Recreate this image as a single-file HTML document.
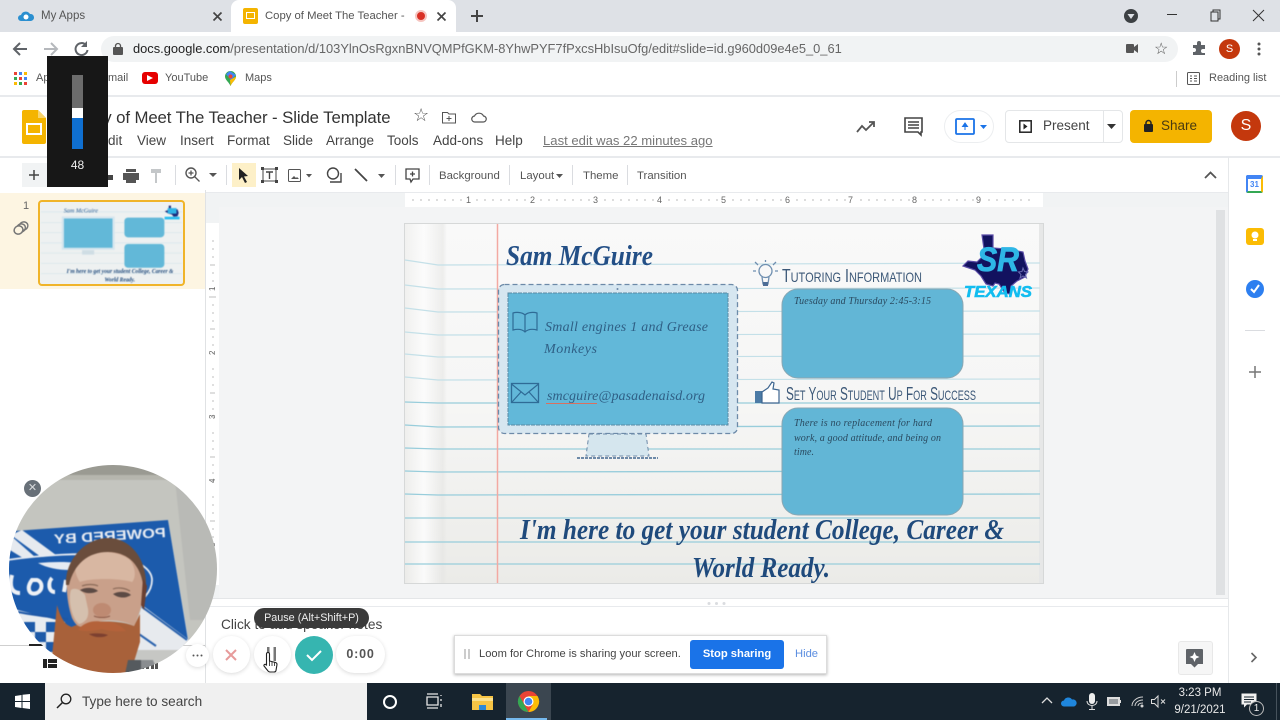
<!DOCTYPE html>
<html><head><meta charset="utf-8"><style>
*{box-sizing:border-box}
html,body{margin:0;padding:0;width:1280px;height:720px;overflow:hidden;background:#fff;font-family:"Liberation Sans",sans-serif;color:#444}
.a{position:absolute;white-space:nowrap}
svg{position:absolute;overflow:visible}
.m{font-size:13.500px;color:#444;top:133px}
.t{font-size:11.400px;color:#555;top:169.500px}
.sep{position:absolute;width:1px;background:#dadce0;top:165px;height:20px}
</style></head><body>
<!-- chrome tabs -->
<div class="a" style="left:0;top:0;width:1280px;height:32px;background:#dee1e6"></div>
<div class="a" style="left:231px;top:0;width:225px;height:32px;background:#fff;border-radius:8px 8px 0 0"></div>
<svg style="left:18px;top:9px" width="16" height="14"><path d="M3 12a3 3 0 0 1 0-6 5 5 0 0 1 9-1 3.500 3.500 0 0 1 1 7z" fill="#2a8fd0"/><circle cx="8" cy="8" r="2.500" fill="#fff"/></svg>
<div class="a" style="left:41px;top:10px;font-size:11.500px;color:#555">My Apps</div>
<svg style="left:213px;top:12px" width="9" height="9"><path d="M.5.500l8 8M8.500.500l-8 8" stroke="#444" stroke-width="1.700"/></svg>
<div class="a" style="left:243px;top:8px;width:15px;height:16px;background:#f4b400;border-radius:2px"></div>
<div class="a" style="left:246px;top:12px;width:9px;height:7px;background:#fff"></div>
<div class="a" style="left:247px;top:13px;width:7px;height:5px;background:#f4b400"></div>
<div class="a" style="left:265px;top:10px;font-size:11.300px;color:#555;width:140px;overflow:hidden">Copy of Meet The Teacher -</div>
<div class="a" style="left:415px;top:10px;width:12px;height:12px;border-radius:50%;background:#d93025;border:2px solid #f6c5c0"></div>
<svg style="left:437px;top:12px" width="9" height="9"><path d="M.5.500l8 8M8.500.500l-8 8" stroke="#444" stroke-width="1.700"/></svg>
<svg style="left:470px;top:9px" width="14" height="14"><path d="M7 1v12M1 7h12" stroke="#444" stroke-width="2"/></svg>
<svg style="left:1124px;top:9px" width="14" height="14"><circle cx="7" cy="7" r="7" fill="#3c4043"/><path d="M3.500 5h7L7 10z" fill="#dee1e6"/></svg>
<svg style="left:1160px;top:8px" width="110" height="16"><path d="M7 6.500h10" stroke="#333" stroke-width="1"/><path d="M51 4h7v9h-7zM53 4V2h7v9h-2" fill="none" stroke="#333"/><path d="M93 2l11 11M104 2L93 13" stroke="#333" stroke-width="1"/></svg>
<!-- address bar -->
<svg style="left:12px;top:40px" width="80" height="18"><path d="M15 9H3M8 3L2 9l6 6" fill="none" stroke="#5f6368" stroke-width="2"/><path d="M32 9h12M39 3l6 6-6 6" fill="none" stroke="#b5b8bc" stroke-width="2"/><path d="M74 5a6 6 0 1 0 1.500 5" fill="none" stroke="#5f6368" stroke-width="2"/><path d="M75 1v6h-6z" fill="#5f6368"/></svg>
<div class="a" style="left:101px;top:36px;width:1077px;height:26px;background:#f1f3f4;border-radius:13px"></div>
<svg style="left:113px;top:43px" width="10" height="12"><rect y="4" width="10" height="8" rx="1" fill="#555"/><path d="M2.500 5V3a2.500 2.500 0 0 1 5 0v2" fill="none" stroke="#555" stroke-width="1.300"/></svg>
<div class="a" style="left:133px;top:41px;font-size:12.870px;color:#666"><span style="color:#222">docs.google.com</span>/presentation/d/103YlnOsRgxnBNVQMPfGKM-8YhwPYF7fPxcsHbIsuOfg/edit#slide=id.g960d09e4e5_0_61</div>
<svg style="left:1126px;top:43px" width="12" height="11"><rect y="1" width="8" height="9" rx="1" fill="#555"/><path d="M8 4l4-3v9L8 7z" fill="#555"/></svg>
<div class="a" style="left:1154px;top:39px;font-size:16px;color:#555">☆</div>
<svg style="left:1192px;top:41px" width="15" height="15"><path d="M1 4h4V2a2 2 0 0 1 4 0v2h4v4h-2a2 2 0 0 0 0 4h2v2H1v-3h1a2 2 0 0 0 0-4H1z" fill="#5f6368"/></svg>
<div class="a" style="left:1219px;top:39px;width:21px;height:20px;border-radius:50%;background:#c4380d;color:#fff;font-size:11px;text-align:center;line-height:20px">S</div>
<svg style="left:1257px;top:42px" width="4" height="15"><circle cx="2" cy="2" r="1.500" fill="#555"/><circle cx="2" cy="7" r="1.500" fill="#555"/><circle cx="2" cy="12" r="1.500" fill="#555"/></svg>
<!-- bookmarks -->
<svg style="left:14px;top:72px" width="13" height="13"><g fill="#ea4335"><rect width="3" height="3"/><rect x="5" width="3" height="3" fill="#4285f4"/><rect x="10" width="3" height="3" fill="#fbbc05"/><rect y="5" width="3" height="3" fill="#34a853"/><rect x="5" y="5" width="3" height="3"/><rect x="10" y="5" width="3" height="3" fill="#4285f4"/><rect y="10" width="3" height="3" fill="#fbbc05"/><rect x="5" y="10" width="3" height="3" fill="#34a853"/><rect x="10" y="10" width="3" height="3"/></g></svg>
<div class="a" style="left:36px;top:72px;font-size:11px;color:#555">Apps</div>
<div class="a" style="left:108px;top:72px;font-size:11px;color:#555">mail</div>
<div class="a" style="left:142px;top:72px;width:16px;height:12px;background:#e60000;border-radius:3px"></div>
<svg style="left:147px;top:75px" width="7" height="7"><path d="M0 0l6 3-6 3z" fill="#fff"/></svg>
<div class="a" style="left:165px;top:72px;font-size:11px;color:#555">YouTube</div>
<svg style="left:225px;top:71px" width="11" height="15"><path d="M5.500 0a5.500 5.500 0 0 1 5.500 5.500C11 9 7 11 5.500 15 4 11 0 9 0 5.500A5.500 5.500 0 0 1 5.500 0z" fill="#34a853"/><path d="M1 3l4 -3 6 4-5 5z" fill="#4285f4"/><path d="M11 5.500C11 9 7 11 5.500 15L5 9z" fill="#fbbc05"/><circle cx="5.500" cy="5.500" r="2" fill="#ea4335"/></svg>
<div class="a" style="left:245px;top:72px;font-size:11px;color:#555">Maps</div>
<div class="a" style="left:1176px;top:71px;width:1px;height:16px;background:#ccc"></div>
<svg style="left:1187px;top:72px" width="13" height="13"><rect x=".5" y=".5" width="12" height="12" rx="1" fill="none" stroke="#555"/><path d="M3 4h2M3 6.500h2M3 9h2M7 4h3M7 6.500h3M7 9h3" stroke="#555"/></svg>
<div class="a" style="left:1209px;top:72px;font-size:11px;color:#555">Reading list</div>
<div class="a" style="left:0;top:95px;width:1280px;height:2px;background:#e8eaed"></div>
<!-- docs header -->
<svg style="left:22px;top:110px" width="24" height="34"><path d="M2 0h14l8 8v24a2 2 0 0 1-2 2H2a2 2 0 0 1-2-2V2a2 2 0 0 1 2-2z" fill="#f4b400"/><path d="M16 0l8 8h-8z" fill="#f8d36a"/><rect x="5" y="14" width="14" height="10" fill="none" stroke="#fff" stroke-width="2"/></svg>
<div class="a" style="left:94px;top:108px;font-size:16.800px;color:#333;letter-spacing:-.1px">py of Meet The Teacher - Slide Template</div>
<div class="a" style="left:413px;top:105px;font-size:18px;color:#555">☆</div>
<svg style="left:442px;top:110px" width="50" height="14"><path d="M.5 2.500h5l1.500 1.500h6.500v9H.5z" fill="none" stroke="#555"/><path d="M7 6v5M4.500 8.500H9.500" stroke="#555"/><path d="M33 12a3 3 0 0 1-.5-6 5 5 0 0 1 9 0 3 3 0 0 1-.5 6z" fill="none" stroke="#555" stroke-width="1.200"/></svg>
<div class="a m" style="left:108px">dit</div>
<div class="a m" style="left:137px">View</div>
<div class="a m" style="left:180px">Insert</div>
<div class="a m" style="left:227px">Format</div>
<div class="a m" style="left:283px">Slide</div>
<div class="a m" style="left:326px">Arrange</div>
<div class="a m" style="left:387px">Tools</div>
<div class="a m" style="left:433px">Add-ons</div>
<div class="a m" style="left:495px">Help</div>
<div class="a m" style="left:543px;font-size:13.100px;top:133px;color:#777;text-decoration:underline">Last edit was 22 minutes ago</div>
<svg style="left:856px;top:120px" width="20" height="14"><path d="M1 12l5-6 4 4 8-8M13 2h5v5" fill="none" stroke="#555" stroke-width="1.800"/></svg>
<svg style="left:904px;top:117px" width="19" height="19"><path d="M1 1h17v14h-1v3l-3-3H1z" fill="none" stroke="#444" stroke-width="1.600"/><path d="M4 5h11M4 8h11M4 11h11" stroke="#444" stroke-width="1.400"/></svg>
<div class="a" style="left:944px;top:110px;width:50px;height:33px;border:1px solid #eceef0;border-radius:17px"></div>
<svg style="left:955px;top:118px" width="32" height="17"><rect x="1" y="1" width="18" height="15" rx="1" fill="none" stroke="#1a73e8" stroke-width="1.800"/><path d="M10 12V7M7.500 8.500L10 5l2.500 3.500z" stroke="#1a73e8" fill="#1a73e8"/><path d="M25 7h7l-3.500 4z" fill="#1a73e8"/></svg>
<div class="a" style="left:1005px;top:110px;width:118px;height:33px;border:1px solid #e4e6e8;border-radius:4px"></div>
<div class="a" style="left:1103px;top:110px;width:1px;height:33px;background:#e4e6e8"></div>
<svg style="left:1019px;top:120px" width="13" height="13"><rect x=".8" y=".8" width="11.400" height="11.400" fill="none" stroke="#222" stroke-width="1.500"/><path d="M4.500 3.500l4 3-4 3z" fill="#222"/></svg>
<div class="a" style="left:1043px;top:118px;font-size:13.500px;color:#444">Present</div>
<svg style="left:1107px;top:124px" width="9" height="5"><path d="M0 0h9L4.500 5z" fill="#333"/></svg>
<div class="a" style="left:1130px;top:110px;width:82px;height:33px;background:#f4b400;border-radius:4px"></div>
<svg style="left:1144px;top:120px" width="9" height="12"><rect y="4" width="9" height="8" rx="1" fill="#222"/><path d="M2 5V3a2.500 2.500 0 0 1 5 0v2" fill="none" stroke="#222" stroke-width="1.500"/></svg>
<div class="a" style="left:1161px;top:118px;font-size:13.500px;color:#4a3b10">Share</div>
<div class="a" style="left:1231px;top:111px;width:30px;height:30px;border-radius:50%;background:#c4380d;color:#fff;font-size:16px;text-align:center;line-height:30px">S</div>
<div class="a" style="left:0;top:156px;width:1280px;height:2px;background:#e8eaed"></div>
<!-- toolbar -->
<div class="a" style="left:22px;top:163px;width:25px;height:24px;background:#f1f3f4"></div>
<svg style="left:29px;top:170px" width="10" height="10"><path d="M5 0v10M0 5h10" stroke="#444" stroke-width="1.500"/></svg>
<svg style="left:105px;top:169px" width="60" height="14"><path d="M0 6h8v5H0z" fill="#444"/><path d="M18 4h16v7h-3v3H21v-3h-3z" fill="#555"/><path d="M21 0h10v3H21z" fill="#555"/><path d="M46 0h10v4H46zM50 4h2v10h-2z" fill="#c4c7c9"/></svg>
<div class="sep" style="left:175px"></div>
<svg style="left:185px;top:167px" width="32" height="16"><circle cx="6" cy="6" r="5" fill="none" stroke="#555" stroke-width="1.400"/><path d="M9.500 9.500l5 5M3.500 6h5M6 3.500v5" stroke="#555" stroke-width="1.300"/><path d="M24 6h8l-4 4z" fill="#555"/></svg>
<div class="sep" style="left:226px"></div>
<div class="a" style="left:232px;top:163px;width:24px;height:24px;background:#fdf0c8"></div>
<svg style="left:238px;top:168px" width="12" height="15"><path d="M1 0l9 8-4 .5 3 5.500-2 1-3-6-3 3z" fill="#222"/></svg>
<svg style="left:261px;top:167px" width="17" height="16"><rect x="2" y="2" width="13" height="12" fill="none" stroke="#444"/><path d="M5 5h7M8.500 5v7" stroke="#444" stroke-width="1.400"/><g fill="#444"><rect width="3" height="3"/><rect x="14" width="3" height="3"/><rect y="13" width="3" height="3"/><rect x="14" y="13" width="3" height="3"/></g></svg>
<svg style="left:288px;top:169px" width="28" height="13"><rect x=".5" y=".5" width="12" height="12" rx="1" fill="none" stroke="#555"/><path d="M3 10l3-3 2 2 1-1 2 2z" fill="#555"/><path d="M18 5h6l-3 3.500z" fill="#555"/></svg>
<svg style="left:326px;top:167px" width="16" height="16"><circle cx="7" cy="6.500" r="5.500" fill="none" stroke="#444" stroke-width="1.400"/><path d="M4 15h11V6" fill="none" stroke="#444" stroke-width="1.400"/></svg>
<svg style="left:354px;top:168px" width="32" height="14"><path d="M1 1l12 12" stroke="#444" stroke-width="1.800"/><path d="M24 6h7l-3.500 4z" fill="#555"/></svg>
<div class="sep" style="left:395px"></div>
<svg style="left:405px;top:168px" width="15" height="15"><path d="M1 1h13v10H8l-2 3-1-3H1z" fill="none" stroke="#444" stroke-width="1.300"/><path d="M7.500 3.500v5M5 6h5" stroke="#444" stroke-width="1.300"/></svg>
<div class="sep" style="left:429px"></div>
<div class="a t" style="left:439px">Background</div>
<div class="sep" style="left:509px"></div>
<div class="a t" style="left:520px">Layout</div>
<svg style="left:556px;top:174px" width="7" height="4"><path d="M0 0h7L3.500 4z" fill="#555"/></svg>
<div class="sep" style="left:572px"></div>
<div class="a t" style="left:583px">Theme</div>
<div class="sep" style="left:627px"></div>
<div class="a t" style="left:637px">Transition</div>
<svg style="left:1204px;top:171px" width="13" height="8"><path d="M1 7l5.500-5.500L12 7" fill="none" stroke="#555" stroke-width="1.800"/></svg>
<!-- panels -->
<div class="a" style="left:219px;top:207px;width:1009px;height:391px;background:#f3f4f5"></div>
<div class="a" style="left:206px;top:193px;width:1022px;height:14px;background:#f1f3f4"></div>
<div class="a" style="left:405px;top:193px;width:638px;height:14px;background:#fff"></div>
<div class="a" style="left:206px;top:207px;width:13px;height:391px;background:#fff"></div>
<div class="a" style="left:206px;top:207px;width:13px;height:16px;background:#f1f3f4"></div>
<div class="a" style="left:206px;top:585px;width:13px;height:13px;background:#f1f3f4"></div>
<div class="a" style="left:205px;top:190px;width:1px;height:493px;background:#e0e2e4"></div>
<div class="a" style="left:1228px;top:157px;width:1px;height:526px;background:#e6e8ea"></div>
<div class="a" style="left:206px;top:192px;width:1022px;height:1px;background:#e8eaed"></div>
<svg style="left:405px;top:193px" width="640" height="14" font-size="9" fill="#666" font-family="Liberation Sans">
<text x="61" y="10">1</text><text x="125" y="10">2</text><text x="188" y="10">3</text><text x="252" y="10">4</text><text x="316" y="10">5</text><text x="380" y="10">6</text><text x="443" y="10">7</text><text x="507" y="10">8</text><text x="571" y="10">9</text>
<path d="M8 6v2M16 6v2M24 6v2M32 6v2M40 6v2M48 6v2M56 6v2M72 6v2M80 6v2M88 6v2M96 6v2M104 6v2M112 6v2M120 6v2M136 6v2M144 6v2M152 6v2M160 6v2M168 6v2M176 6v2M184 6v2M200 6v2M208 6v2M216 6v2M224 6v2M232 6v2M240 6v2M248 6v2M264 6v2M272 6v2M280 6v2M288 6v2M296 6v2M304 6v2M312 6v2M328 6v2M336 6v2M344 6v2M352 6v2M360 6v2M368 6v2M376 6v2M392 6v2M400 6v2M408 6v2M416 6v2M424 6v2M432 6v2M440 6v2M456 6v2M464 6v2M472 6v2M480 6v2M488 6v2M496 6v2M504 6v2M520 6v2M528 6v2M536 6v2M544 6v2M552 6v2M560 6v2M568 6v2M584 6v2M592 6v2M600 6v2M608 6v2M616 6v2M624 6v2" stroke="#aaa" stroke-width=".8"/></svg>
<svg style="left:206px;top:207px" width="13" height="390" font-size="8" fill="#666" font-family="Liberation Sans">
<path d="M6 34h2M6 42h2M6 50h2M4 58h5M6 66h2M6 74h2M6 82h2M3 90h7M6 98h2M6 106h2M6 114h2M4 122h5M6 130h2M6 138h2M6 146h2M6 162h2M6 170h2M6 178h2M4 186h5M6 194h2M6 202h2M6 210h2M6 226h2M6 234h2M6 242h2M4 250h5M6 258h2M6 266h2M6 274h2M6 290h2M6 298h2M6 306h2M4 314h5M6 322h2M6 330h2" stroke="#aaa" stroke-width=".8"/>
<text transform="translate(9 84) rotate(-90)">1</text><text transform="translate(9 148) rotate(-90)">2</text><text transform="translate(9 212) rotate(-90)">3</text><text transform="translate(9 276) rotate(-90)">4</text><text transform="translate(9 340) rotate(-90)">5</text></svg>
<div class="a" style="left:1216px;top:210px;width:9px;height:385px;background:#dfe1e3"></div>
<div class="a" style="left:0;top:193px;width:205px;height:96px;background:#fdf5e2"></div>
<div class="a" style="left:23px;top:200px;font-size:11px;color:#666">1</div>
<svg style="left:13px;top:221px" width="16" height="14"><g fill="none" stroke="#777" stroke-width="1.500"><ellipse cx="10.500" cy="5" rx="4.500" ry="4" transform="rotate(-30 10.500 5)"/><ellipse cx="8" cy="7" rx="4.500" ry="4" transform="rotate(-30 8 7)"/><ellipse cx="5.500" cy="9" rx="4.500" ry="4" transform="rotate(-30 5.500 9)" fill="#fdf5e2"/></g></svg>
<!-- thumbnail -->
<div class="a" style="left:38px;top:200px;width:147px;height:86px;border:2px solid #f0b429;border-radius:4px;background:#eef1f1;overflow:hidden"></div>
<svg style="left:41px;top:203px;filter:blur(.5px)" width="141" height="80" viewBox="404 223 639 361" preserveAspectRatio="none">
<path d="M404 263h639M404 312h639M404 357h639M404 403h639M404 449h639M404 495h639M404 542h639" stroke="#d5e6ec" stroke-width="3"/>
<rect x="498" y="284" width="240" height="150" fill="#d5e5ee"/><rect x="508" y="293" width="220" height="132" fill="#62b8d8"/>
<rect x="782" y="289" width="181" height="89" rx="16" fill="#62b8d8"/><rect x="782" y="408" width="181" height="107" rx="16" fill="#62b8d8"/>
<path d="M965 261l18-8v-18h10v13l30 4 5 16-5 15-18 2-8-10-15-4z" fill="#1c2a7a"/><path d="M978 246h40v25h-40z" fill="#2fb3e6"/><rect x="964" y="285" width="68" height="12" fill="#25bdf0"/>
<rect x="590" y="436" width="55" height="20" fill="#cfdde4"/>
<text x="507" y="265" font-family="Liberation Serif" font-style="italic" font-size="28" fill="#2a5d94">Sam McGuire</text>
<text x="520" y="540" font-family="Liberation Serif" font-style="italic" font-weight="bold" font-size="28" fill="#1f4a7c" textLength="484" lengthAdjust="spacingAndGlyphs">I'm here to get your student College, Career &amp;</text>
<text x="692" y="578" font-family="Liberation Serif" font-style="italic" font-weight="bold" font-size="28" fill="#1f4a7c" textLength="138" lengthAdjust="spacingAndGlyphs">World Ready.</text>
</svg>
<!-- slide -->
<div class="a" style="left:404px;top:223px;width:640px;height:361px;background:linear-gradient(180deg,#f9f9f9 0,#f6f6f5 50%,#ebebe8 100%);border:1px solid #d6d8d8;overflow:hidden"></div>
<div class="a" style="left:405px;top:224px;width:42px;height:359px;background:linear-gradient(90deg,rgba(235,235,233,.6),rgba(252,252,252,.9) 45%,rgba(228,228,226,.55) 90%,rgba(240,240,238,0))"></div>
<div class="a" style="left:1039px;top:224px;width:4px;height:359px;background:#e6e7e7"></div>
<svg style="left:404px;top:223px" width="640" height="361" viewBox="404 223 640 361">
<g stroke="#c4e0e8" stroke-width="1.200" fill="none">
<path d="M405 260l33 5 602-2M405 285l33 4 602-1M405 308l33 4 602-1M405 332l33 3 602-1M405 354l33 3 602-1M405 377l33 3 602-1"/>
</g>
<g stroke="#98cddb" stroke-width="1.300" fill="none">
<path d="M405 402l33 1 602 0M405 425l33 2 602-1M405 448l33 1 602 0M405 471l33 1 602-1M405 494l33 1 602-1M405 518h635M405 542h635M405 564h635"/>
</g>
<path d="M497.500 224v359" stroke="#f3a9a2" stroke-width="1.500"/>
<!-- monitor -->
<rect x="498.500" y="284.500" width="239" height="149" rx="6" fill="#d6e6f0" stroke="#6d8aa8" stroke-width="1.300" stroke-dasharray="5 3"/>
<rect x="508" y="293" width="220" height="132" fill="#62b8d9" stroke="#5a8aa4" stroke-width="1" stroke-dasharray="4 1"/>
<circle cx="617.500" cy="289" r="1" fill="#6d8aa8"/>
<path d="M589 434h57l3 22h-63z" fill="#d5e6ee" stroke="#6d8aa8" stroke-dasharray="4 3"/>
<path d="M577 458h81" stroke="#6d8aa8" stroke-width="2" stroke-dasharray="3 1"/>
<!-- book -->
<path d="M525 315c-3-3-9-3-12-2v17c4-1 9-1 12 2 3-3 8-3 12-2v-17c-3-1-9-1-12 2zM525 315v17" fill="none" stroke="#2f6b96" stroke-width="1.200"/>
<rect x="511.500" y="383.500" width="27" height="19" fill="none" stroke="#2f6b96" stroke-width="1.300"/><path d="M511.500 384l13.500 11 13.500-11M512 402l9-10M538 402l-9-10" fill="none" stroke="#2f6b96" stroke-width="1.200"/>
<path d="M546 403.500h51" stroke="#d9705f" stroke-width="1"/>
<!-- bulb -->
<g fill="none" stroke="#6f8fb0" stroke-width="1.300"><circle cx="765.500" cy="271" r="6.500"/><path d="M762 277l1 7h5l1-7"/><path d="M755 262l3 3M776 262l-3 3M753 271h3M778 271h-3M765.500 260v2"/></g><path d="M763 282h5v4h-5z" fill="#4c6d96"/>
<!-- thumb -->
<path d="M755 391h7v12h-7z" fill="#4c7ba6"/><path d="M762 392l6-4 4-6 2 1-1 6 6 1v13h-17z" fill="#fff" stroke="#3d6590" stroke-width="1.200"/>
<rect x="782" y="289" width="181" height="89" rx="16" fill="#62b6d6" stroke="#8aa7b3"/>
<rect x="782" y="408" width="181" height="107" rx="16" fill="#62b6d6" stroke="#8aa7b3"/>
<!-- logo -->
<path d="M982 235h11v13l13 1 17 3 2 9 3 8-3 8-8 4-6 5-1 8-5-1-6-9-4-1-2 3-7-2-5-8-6-6-9-3-3-1 5-5 9 1 6-6 1-7z" fill="#12125f" stroke="#5a4ca6" stroke-width="1.200"/>
<path d="M1023 268l1.500 3.500 3.500.5-2.500 2.500 1 3.500-3.500-2-3 2 1-3.500-2.500-2.500 3.500-.5z" fill="none" stroke="#6a6ab0"/>
<text x="977" y="271" font-family="Liberation Sans" font-weight="bold" font-style="italic" font-size="34" fill="#2eb6e6" stroke="#2eb6e6" stroke-width=".8" textLength="42" lengthAdjust="spacingAndGlyphs">SR</text>
<text x="964" y="297" font-family="Liberation Sans" font-weight="bold" font-style="italic" font-size="16" fill="#12bdf0" stroke="#12bdf0" stroke-width=".6" textLength="68" lengthAdjust="spacingAndGlyphs">TEXANS</text>
<!-- texts -->
<text x="506" y="265" font-family="Liberation Serif" font-style="italic" font-weight="bold" font-size="29" fill="#234f86" textLength="147" lengthAdjust="spacingAndGlyphs">Sam McGuire</text>
<g font-family="Liberation Serif" font-style="italic" fill="#2f5f85" font-size="14">
<text x="545" y="331" textLength="163">Small engines 1 and Grease</text>
<text x="544" y="353" textLength="53">Monkeys</text>
<text x="547" y="400" textLength="158">smcguire@pasadenaisd.org</text></g>
<g font-family="Liberation Sans" fill="#3c5878">
<text x="782" y="282" font-size="18" textLength="140" lengthAdjust="spacingAndGlyphs">T<tspan font-size="14">UTORING</tspan> I<tspan font-size="14">NFORMATION</tspan></text>
<text x="786" y="400" font-size="18" textLength="190" lengthAdjust="spacingAndGlyphs">S<tspan font-size="14">ET</tspan> Y<tspan font-size="14">OUR</tspan> S<tspan font-size="14">TUDENT</tspan> U<tspan font-size="14">P</tspan> F<tspan font-size="14">OR</tspan> S<tspan font-size="14">UCCESS</tspan></text></g>
<g font-family="Liberation Serif" font-style="italic" fill="#2a4a60" font-size="10">
<text x="794" y="304" textLength="137">Tuesday and Thursday 2:45-3:15</text>
<text x="794" y="426" textLength="138">There is no replacement for hard</text>
<text x="794" y="441" textLength="147">work, a good attitude, and being on</text>
<text x="794" y="455" textLength="20">time.</text></g>
<g font-family="Liberation Serif" font-style="italic" font-weight="bold" fill="#1f4a7c" font-size="28">
<text x="520" y="539" textLength="484" lengthAdjust="spacingAndGlyphs">I'm here to get your student College, Career &amp;</text>
<text x="692" y="577" textLength="138" lengthAdjust="spacingAndGlyphs">World Ready.</text></g>
</svg>
<!-- notes -->
<div class="a" style="left:206px;top:598px;width:1022px;height:1px;background:#e4e6e8"></div>
<div class="a" style="left:206px;top:599px;width:1022px;height:8px;background:#fff;border-bottom:1px solid #e8eaed"></div>
<svg style="left:706px;top:601px" width="22" height="5"><circle cx="3" cy="2.500" r="1.500" fill="#dadce0"/><circle cx="10.500" cy="2.500" r="1.500" fill="#dadce0"/><circle cx="18" cy="2.500" r="1.500" fill="#dadce0"/></svg>
<div class="a" style="left:221px;top:617px;font-size:13.700px;color:#444">Click to add speaker notes</div>
<div class="a" style="left:454px;top:635px;width:373px;height:39px;background:#fff;border:1px solid #dcdcdc;box-shadow:0 1px 3px rgba(0,0,0,.3)"></div>
<div class="a" style="left:464px;top:649px;width:2px;height:10px;background:#ccc"></div><div class="a" style="left:468px;top:649px;width:2px;height:10px;background:#ccc"></div>
<div class="a" style="left:479px;top:648px;font-size:11.150px;line-height:13px;color:#444">Loom for Chrome is sharing your screen.</div>
<div class="a" style="left:690px;top:640px;width:94px;height:29px;background:#1a73e8;border-radius:3px;color:#fff;font-size:11.200px;font-weight:bold;text-align:center;line-height:29px">Stop sharing</div>
<div class="a" style="left:795px;top:648px;font-size:11.200px;line-height:13px;color:#5a8de0">Hide</div>
<div class="a" style="left:1178px;top:641px;width:35px;height:34px;background:#f6f6f6;border:1px solid #e8e8e8;border-radius:3px"></div>
<svg style="left:1186px;top:649px" width="17" height="19"><path d="M1 0h15a1 1 0 0 1 1 1v14h-5l-3.500 3.500L5 15H0V1a1 1 0 0 1 1-1z" fill="#5f6368"/><path d="M8.500 3l1.500 3.500 3.500 1.500-3.500 1.500-1.500 3.500-1.500-3.500L3.500 8 7 6.500z" fill="#fff"/></svg>
<svg style="left:1250px;top:652px" width="8" height="11"><path d="M1.500 1l4.500 4.500L1.500 10" fill="none" stroke="#666" stroke-width="1.600"/></svg>
<!-- right sidebar -->
<div class="a" style="left:1246px;top:175px;width:17px;height:18px;background:#fff;border:2px solid #4285f4;border-top-width:4px;border-radius:2px;border-right-color:#fbbc05;border-bottom-color:#34a853;color:#4285f4;font-size:8px;text-align:center;line-height:11px;font-weight:bold">31</div>
<div class="a" style="left:1246px;top:228px;width:18px;height:17px;background:#fbbc04;border-radius:3px"></div>
<svg style="left:1251px;top:231px" width="8" height="11"><circle cx="4" cy="4" r="3.500" fill="#fff"/><rect x="2" y="8" width="4" height="2" fill="#fff"/></svg>
<div class="a" style="left:1246px;top:280px;width:18px;height:18px;background:#2d7ff0;border-radius:50%"></div>
<svg style="left:1250px;top:284px" width="10" height="10"><path d="M1 5l3 3 5-7" fill="none" stroke="#fff" stroke-width="2"/></svg>
<div class="a" style="left:1245px;top:330px;width:20px;height:1px;background:#dadce0"></div>
<svg style="left:1249px;top:366px" width="12" height="12"><path d="M6 0v12M0 6h12" stroke="#777" stroke-width="1.500"/></svg>
<!-- bottom left filmstrip footer -->
<div class="a" style="left:0;top:645px;width:205px;height:1px;background:#cfcfcf"></div>
<div class="a" style="left:29px;top:644px;width:18px;height:2px;background:#222"></div>
<svg style="left:43px;top:659px" width="14" height="9"><path d="M0 0h4v9H0zM5 0h9v4H5zM5 5h9v4H5z" fill="#222"/></svg>
<svg style="left:140px;top:663px" width="19" height="6"><path d="M0 0h4v6H0zM6 0h3v6H6zM11 0h3v6h-3zM15 0h3v6h-3z" fill="#555"/></svg>
<!-- webcam -->
<svg style="left:0;top:460px" width="230" height="220" viewBox="0 460 230 220">
<defs><clipPath id="c"><circle cx="113" cy="569" r="104"/></clipPath></defs>
<g clip-path="url(#c)">
<g style="filter:blur(.6px)">
<rect x="0" y="460" width="230" height="220" fill="#c4c5bf"/>
<rect x="0" y="460" width="230" height="15" fill="#9a9a92"/>
<rect x="0" y="475" width="230" height="5" fill="#b6b6ae"/>
<path d="M175 480h45v140h-30z" fill="#b9bab6"/>
<path d="M168 520l20 118-3 3-3 0-20-120z" fill="#e6e8ea"/>
<!-- blue flag -->
<path d="M0 532l168-12 20 120-48-34-130 40L0 620z" fill="#1c5bac"/>
<!-- white top-left corner stripes -->
<path d="M22 530l34 25-15 2-30-22zM0 536l10-1 25 22-12 1-23-14z" fill="#e6eaef"/>
<text transform="translate(166 537) scale(-1 1) rotate(3.500)" font-family="Liberation Sans" font-weight="bold" font-size="13.500" fill="#e8ecf2" textLength="112" lengthAdjust="spacingAndGlyphs">POWERED BY</text>
<!-- oval -->
<path d="M0 561c40-6 85-9 115-5 22 3 37 13 37 24 0 12-10 22-25 30" fill="none" stroke="#e6ebf2" stroke-width="1.800"/>
<path d="M38 563c20-2 40-1 58 2-12 6-40 8-58-2z" fill="#e6ebf2"/>
<g fill="none" stroke="#eef1f5" stroke-width="4">
<path d="M12 575c-3 12 0 18 8 18"/><path d="M32 580c-6 8-3 16 5 13 6-3 6-11 0-13z"/><path d="M52 578c-4 4-4 14 3 14"/><path d="M66 580l-2 12"/>
</g>
<!-- white band lower -->
<path d="M10 608l55 14 0 50H30L6 645z" fill="#e8ecf0"/>
<path d="M18 612c20 4 42 6 50 7" stroke="#1d57a6" stroke-width="2" fill="none"/>
<path d="M24 622h11v10H24zM46 622h11v10H46zM35 632h11v10H35zM57 632h8v10h-8zM46 642h11v10H46zM30 642h6v8h-6z" fill="#1d5aa8"/>
<!-- lower right white -->
<path d="M142 605l47 35-14 15-45-5z" fill="#e7eaee"/>
<path d="M142 607l45 33M136 632l20 14" stroke="#2a62ad" stroke-width="2" fill="none"/>
<path d="M130 650h55v25h-55z" fill="#c6c7c4"/>
<!-- beard -->
<path d="M57 605c4 14 8 20 15 22 10-6 46-8 62-1l6-12 0 28-10 33H58l-6-18z" fill="#a8613a"/>
<path d="M56 660l14 15H46z" fill="#3a3c3a"/>
<path d="M128 660l14 0 8 14h-25z" fill="#555a5e"/>
<path d="M141 660h12l4 10h-16z" fill="#8a8d90"/>
<!-- face -->
<path d="M67 578c1-20 17-32 38-32 23 0 37 14 40 34l-3 24c-3 10-6 18-8 22-10-6-30-8-42-2-12 6-16 2-20-6-4-12-6-26-5-40z" fill="#c9a08a"/>
<path d="M71 590c-3 8 0 28 8 34 8-2 10-8 9-15l-3-14c-4-5-10-8-14-5z" fill="#d5c0ae"/>
<path d="M78 556c12-7 40-6 52 4 6 8 6 18 2 22-12-4-42-4-52 0-6-8-6-20-2-26z" fill="#d8b7a2"/>
<!-- hair -->
<path d="M66 585c-1-26 20-47 42-47 22 0 38 20 38 46l-3 0c-3-18-14-32-35-32-20 0-34 12-39 33z" fill="#6a4d3c"/>
<path d="M143 578l4 8-3 24-3-5z" fill="#6a4032"/>
<!-- eyes -->
<path d="M80 590c5-3 14-3 18 1-5 3-13 3-18-1zM113 594c5-3 14-3 18 1-6 4-13 3-18-1z" fill="#5c4a44"/>
<path d="M82 586c5-2 12-2 16 0M113 589c5-2 12-1 17 2" stroke="#8a6a58" stroke-width="1.200" fill="none"/>
<!-- nose -->
<ellipse cx="102" cy="610" rx="9" ry="7" fill="#be8a72"/>
<path d="M94 616c4 2 12 2 16 0" stroke="#8c5a48" fill="none"/>
<!-- mustache + lip -->
<path d="M78 630c6-8 16-10 24-8 8-2 18 2 24 9-8 1-18 0-24-2-8 2-16 3-24 1z" fill="#b4623a"/>
<path d="M89 634c6-1 14-1 19 1-4 3-14 3-19-1z" fill="#7c4030"/>
</g></g>
</svg>
<div class="a" style="left:24px;top:480px;width:17px;height:17px;border-radius:50%;background:#687078;color:#d8dadc;font-size:11px;text-align:center;line-height:17px">✕</div>
<!-- loom controls -->
<div class="a" style="left:186px;top:644px;width:23px;height:23px;border-radius:50%;background:#fff;box-shadow:0 1px 4px rgba(0,0,0,.15)"></div>
<svg style="left:192px;top:654px" width="11" height="3"><circle cx="1.500" cy="1.500" r="1" fill="#555"/><circle cx="5.500" cy="1.500" r="1" fill="#555"/><circle cx="9.500" cy="1.500" r="1" fill="#555"/></svg>
<div class="a" style="left:213px;top:636px;width:37px;height:37px;border-radius:50%;background:#fff;box-shadow:0 1px 4px rgba(0,0,0,.15)"></div>
<svg style="left:225px;top:649px" width="12" height="12"><path d="M1 1l10 10M11 1L1 11" stroke="#e79a9a" stroke-width="2"/></svg>
<div class="a" style="left:254px;top:636px;width:37px;height:37px;border-radius:50%;background:#fff;box-shadow:0 1px 4px rgba(0,0,0,.15)"></div>
<svg style="left:267px;top:647px" width="10" height="14"><rect width="2.500" height="14" fill="#777"/><rect x="6.500" width="2.500" height="14" fill="#777"/></svg>
<div class="a" style="left:295px;top:636px;width:38px;height:38px;border-radius:50%;background:#36b5b0"></div>
<svg style="left:306px;top:649px" width="16" height="12"><path d="M1 6l5 5 9-9" fill="none" stroke="#fff" stroke-width="2"/></svg>
<div class="a" style="left:336px;top:636px;width:49px;height:37px;border-radius:19px;background:#fff;box-shadow:0 1px 4px rgba(0,0,0,.15);color:#555;font-size:12.500px;font-weight:bold;text-align:center;line-height:37px;letter-spacing:.8px">0:00</div>
<div class="a" style="left:254px;top:608px;width:115px;height:20px;background:#3a3a3a;border-radius:10px;color:#eee;font-size:10.800px;text-align:center;line-height:20px">Pause (Alt+Shift+P)</div>
<svg style="left:263px;top:651px" width="16" height="24"><path d="M5 1.500c1 0 1.500.7 1.500 1.500v7l6 1.500c1 .3 1.500 1 1.500 2l-1 6c-.2 1-1 1.500-2 1.500H7c-1 0-1.500-.5-2-1L1 15c-.5-1 .5-2 2-1.500l.5 1V3c0-1 .5-1.500 1.500-1.500z" fill="#fff" stroke="#222" stroke-width="1.100"/><path d="M6.500 10v5M9 11v4M11.500 11.500v3.500" stroke="#222" stroke-width=".8"/></svg>
<!-- taskbar -->
<div class="a" style="left:0;top:683px;width:1280px;height:37px;background:#16232e"></div>
<svg style="left:15px;top:694px" width="15" height="15"><path d="M0 2l6.500-1v6H0zM7.500.8L15 0v7H7.500zM0 8h6.500v6L0 13zM7.500 8H15v7l-7.500-1z" fill="#fff"/></svg>
<div class="a" style="left:45px;top:683px;width:322px;height:37px;background:#f0f0f0"></div>
<svg style="left:56px;top:693px" width="16" height="16"><circle cx="10" cy="6" r="4.800" fill="none" stroke="#222" stroke-width="1.300"/><path d="M6.500 9.500L1 15" stroke="#222" stroke-width="1.500"/></svg>
<div class="a" style="left:82px;top:694px;font-size:13.600px;color:#444">Type here to search</div>
<div class="a" style="left:383px;top:695px;width:14px;height:14px;border-radius:50%;border:2px solid #fff"></div>
<svg style="left:426px;top:693px" width="17" height="16"><path d="M1 4h11v8H1z" fill="none" stroke="#e6e6e6" stroke-width="1.300"/><path d="M1 1h11M1 15h11M15 2v1M15 6v2M15 11v3" stroke="#e6e6e6" stroke-width="1.300"/></svg>
<svg style="left:472px;top:692px" width="21" height="19"><path d="M0 2h8l2 2h11v14H0z" fill="#f6c445"/><path d="M0 6h21v3H0z" fill="#fbe08b"/><path d="M7 13h7v5H7z" fill="#2b88d8"/></svg>
<div class="a" style="left:506px;top:683px;width:45px;height:37px;background:#3b4650"></div>
<div class="a" style="left:506px;top:718px;width:41px;height:2px;background:#76b9ed"></div>
<svg style="left:518px;top:691px" width="21" height="21" viewBox="0 0 21 21"><circle cx="10.500" cy="10.500" r="10.500" fill="#ea4335"/><path d="M10.500 21A10.500 10.500 0 0 1 1.500 5l5 9z" fill="#34a853"/><path d="M10.500 21a10.500 10.500 0 0 0 9-16h-9l4 9z" fill="#fbbc05"/><circle cx="10.500" cy="10.500" r="5" fill="#fff"/><circle cx="10.500" cy="10.500" r="3.800" fill="#4285f4"/></svg>
<svg style="left:1041px;top:696px" width="12" height="8"><path d="M1 7l5-5 5 5" fill="none" stroke="#ddd" stroke-width="1.300"/></svg>
<svg style="left:1061px;top:696px" width="16" height="11"><path d="M3 10.500a3 3 0 0 1 0-6 4.500 4.500 0 0 1 8-1 3.500 3.500 0 0 1 2 7z" fill="#1f86dc"/></svg>
<svg style="left:1086px;top:693px" width="12" height="17"><rect x="3" width="6" height="11" rx="3" fill="#eee"/><path d="M1 8c0 6 10 6 10 0M6 13v3M3 16.500h6" fill="none" stroke="#ddd"/></svg>
<svg style="left:1107px;top:697px" width="14" height="9"><rect x=".5" y=".5" width="12" height="8" fill="#ddd" stroke="#ddd"/><rect x="2" y="2" width="9" height="5" fill="#16232e" opacity=".35"/><rect x="13" y="3" width="1" height="3" fill="#ddd"/></svg>
<svg style="left:1131px;top:696px" width="13" height="11" fill="none" stroke="#cfcfcf"><path d="M1 10C1 5 6 1 12 1M4 10c0-3 3-6 8-6M7 10c0-2 2-3 5-3"/><circle cx="11" cy="10" r="1" fill="#eee"/></svg>
<svg style="left:1151px;top:695px" width="15" height="13" fill="none" stroke="#ddd"><path d="M.5 4.500h3L7 1v11L3.500 8.500h-3z"/><path d="M10 4.500l4 4M14 4.500l-4 4"/></svg>
<div class="a" style="left:1165px;top:685px;width:70px;text-align:center;font-size:11.500px;color:#e8e8e8;line-height:17px;white-space:normal">3:23 PM<br>9/21/2021</div>
<svg style="left:1241px;top:693px" width="16" height="15"><path d="M.5.500h15v11H6l-3 3v-3H.5z" fill="#f0f0f0"/><path d="M3 4h10M3 6.500h10M3 9h7" stroke="#16232e"/></svg>
<div class="a" style="left:1249px;top:701px;width:15px;height:15px;border-radius:50%;background:#16232e;border:1px solid #bbb;color:#eee;font-size:10px;text-align:center;line-height:13px">1</div>
<div class="a" style="left:1276px;top:683px;width:1px;height:37px;background:#46525c"></div>
<!-- volume overlay -->
<div class="a" style="left:47px;top:56px;width:61px;height:131px;background:#171717"></div>
<div class="a" style="left:72px;top:75px;width:11px;height:33px;background:#6c6c6c"></div>
<div class="a" style="left:72px;top:108px;width:11px;height:10px;background:#fff"></div>
<div class="a" style="left:72px;top:118px;width:11px;height:31px;background:#0f6fd0"></div>
<div class="a" style="left:47px;top:158px;width:61px;text-align:center;font-size:12px;color:#eee">48</div>
</body></html>
